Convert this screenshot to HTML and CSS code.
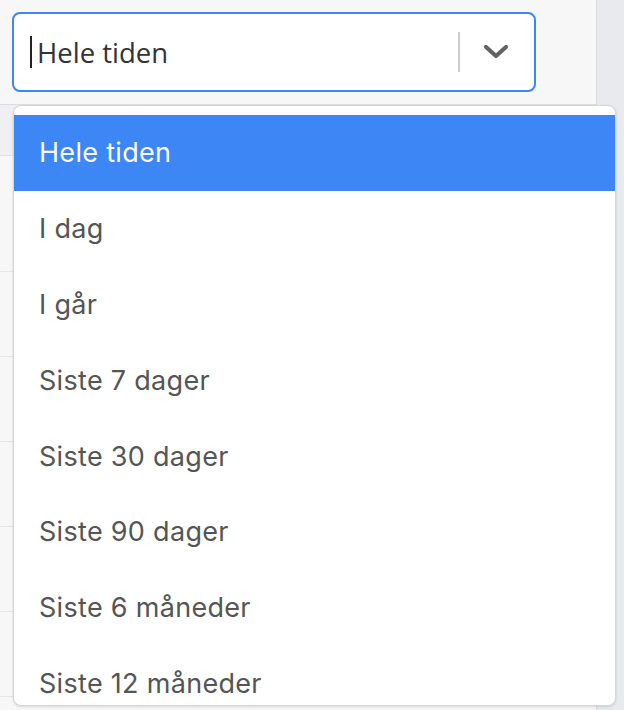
FILE: index.html
```html
<!DOCTYPE html>
<html lang="no">
<head>
<meta charset="utf-8">
<title>Periode</title>
<link rel="stylesheet" href="styles.css">
</head>
<body>
<div class="page">
  <div class="main">
    <div class="toolbar">
      <div class="select-wrap">
        <div class="select">
          <div class="value"><span class="caret"></span>Hele tiden</div>
          <span class="sep"></span>
          <span class="indicator">
            <svg width="26" height="16" viewBox="0 0 26 16"><path d="M3 3 L13 12 L23 3" fill="none" stroke="#636363" stroke-width="4.2" stroke-linecap="round" stroke-linejoin="round"/></svg>
          </span>
        </div>
        <ul class="menu">
          <li class="opt active">Hele tiden</li>
          <li class="opt">I dag</li>
          <li class="opt">I går</li>
          <li class="opt">Siste 7 dager</li>
          <li class="opt">Siste 30 dager</li>
          <li class="opt">Siste 90 dager</li>
          <li class="opt">Siste 6 måneder</li>
          <li class="opt">Siste 12 måneder</li>
        </ul>
      </div>
    </div>
    <div class="table">
      <div class="thead"></div>
      <div class="row tall"><span class="c1"></span><span class="c2"></span></div>
      <div class="row"><span class="c1"></span><span class="c2"></span></div>
      <div class="row"><span class="c1"></span><span class="c2"></span></div>
      <div class="row"><span class="c1"></span><span class="c2"></span></div>
      <div class="row"><span class="c1"></span><span class="c2"></span></div>
      <div class="row"><span class="c1"></span><span class="c2"></span></div>
    </div>
  </div>
  <div class="side"></div>
</div>
</body>
</html>
```
FILE: styles.css
```css
html, body {
  margin: 0;
  padding: 0;
  height: 710px;
  overflow: hidden;
}
body {
  font-family: Inter, "Liberation Sans", sans-serif;
}
.page {
  display: flex;
  height: 710px;
}
.main {
  width: 596px;
  background: #f7f7f8;
  border-right: 1px solid #dcdcde;
  display: flex;
  flex-direction: column;
}
.side {
  flex: 1;
  background: #e9eaee;
}
.toolbar {
  height: 92px;
  padding: 12px 0 0 12px;
  border-bottom: 1px solid #dedee0;
}
.select-wrap {
  position: relative;
  width: 524px;
}
.select {
  box-sizing: border-box;
  height: 80px;
  width: 524px;
  border: 2.5px solid #3d86f5;
  border-radius: 8px;
  background: #fff;
  display: flex;
  align-items: center;
}
.value {
  flex: 1;
  display: flex;
  align-items: center;
  padding-left: 16px;
  font-family: "Open Sans", "Noto Sans", sans-serif;
  font-size: 27.5px;
  color: #333;
}
.caret {
  width: 2px;
  height: 32px;
  background: #222;
  margin-right: 5px;
}
.sep {
  width: 2px;
  height: 40px;
  background: #cccccc;
}
.indicator {
  width: 72px;
  display: flex;
  justify-content: center;
  align-items: center;
  padding-right: 2px;
}
.menu {
  position: absolute;
  top: 93px;
  left: 1px;
  width: 603px;
  height: 601px;
  margin: 0;
  padding: 9px 0 0 0;
  box-sizing: border-box;
  list-style: none;
  background: #fff;
  border: 1px solid #d6d6d8;
  border-radius: 8px;
  box-shadow: 0 1px 3px rgba(0,0,0,0.12);
  overflow: hidden;
}
.opt {
  height: 75.8px;
  display: flex;
  align-items: center;
  padding-left: 25px;
  font-size: 27px;
  letter-spacing: 0.3px;
  color: #555;
}
.opt.active {
  background: #3d86f6;
  color: #fff;
}
.table {
  flex: 1;
  display: flex;
  flex-direction: column;
}
.thead {
  height: 50px;
  background: #f0f0f2;
  border-bottom: 1px solid #e2e2e4;
}
.row {
  height: 84px;
  display: flex;
  border-bottom: 1px solid #e6e6e8;
}
.row.tall {
  height: 115px;
}
.c1 {
  width: 153px;
}
.c2 {
  flex: 1;
  border-left: 1px solid #e0e0e2;
}
```
